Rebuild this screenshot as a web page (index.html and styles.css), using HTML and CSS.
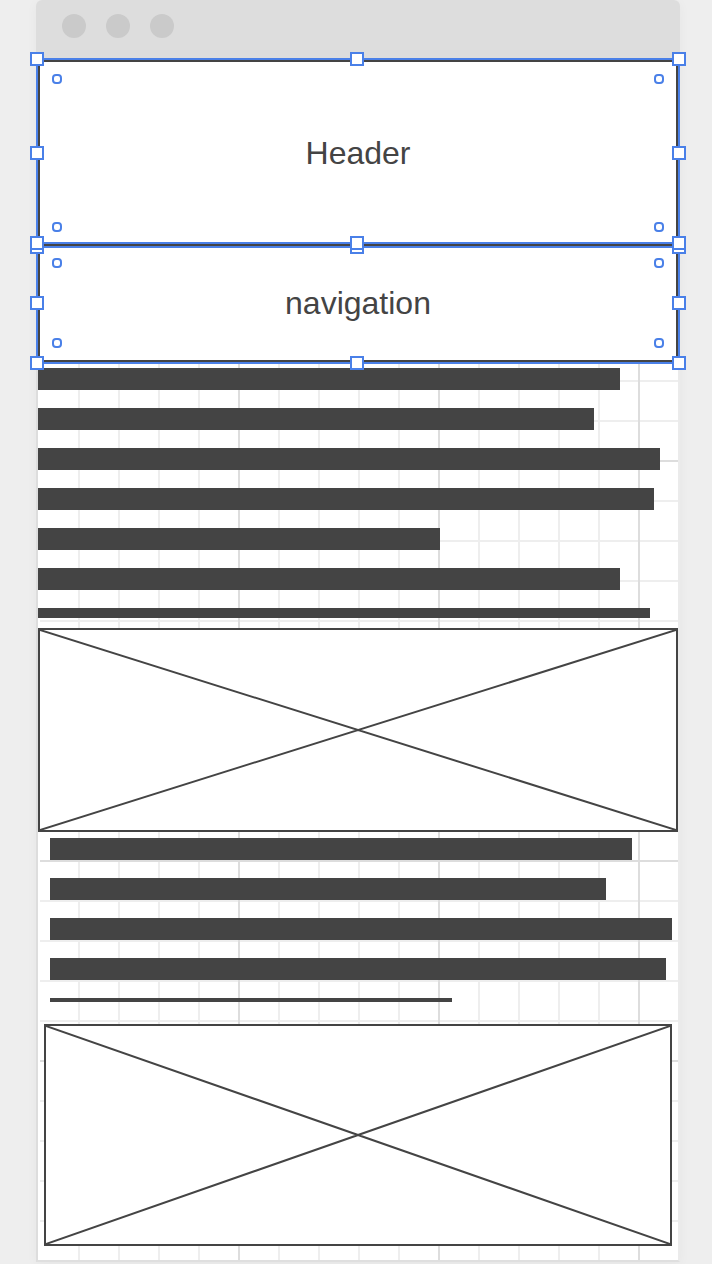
FILE: index.html
```html
<!DOCTYPE html>
<html lang="en">
<head>
<meta charset="utf-8">
<meta name="viewport" content="width=device-width, initial-scale=1">
<title>Wireframe</title>
<link rel="stylesheet" href="styles.css">
</head>
<body>
<div class="window">
  <div class="titlebar"><span class="dot"></span><span class="dot"></span><span class="dot"></span></div>
  <main class="canvas">
    <header class="box box-header">
      Header
      <i class="handle top left"></i><i class="handle top center"></i><i class="handle top right"></i>
      <i class="handle middle left"></i><i class="handle middle right"></i>
      <i class="handle bottom left"></i><i class="handle bottom center"></i><i class="handle bottom right"></i>
      <i class="corner c-top c-left"></i><i class="corner c-top c-right"></i>
      <i class="corner c-bottom c-left"></i><i class="corner c-bottom c-right"></i>
    </header>
    <nav class="box box-nav">
      navigation
      <i class="handle top left"></i><i class="handle top center"></i><i class="handle top right"></i>
      <i class="handle middle left"></i><i class="handle middle right"></i>
      <i class="handle bottom left"></i><i class="handle bottom center"></i><i class="handle bottom right"></i>
      <i class="corner c-top c-left"></i><i class="corner c-top c-right"></i>
      <i class="corner c-bottom c-left"></i><i class="corner c-bottom c-right"></i>
    </nav>
    <div class="text text-intro">
      <span class="bar" style="width:582px"></span>
      <span class="bar" style="width:556px"></span>
      <span class="bar" style="width:622px"></span>
      <span class="bar" style="width:616px"></span>
      <span class="bar" style="width:402px"></span>
      <span class="bar" style="width:582px"></span>
      <span class="bar" style="width:612px"></span>
    </div>
    <div class="image image-wide">
      <svg viewBox="0 0 100 100" preserveAspectRatio="none" aria-hidden="true"><path d="M0 0L100 100M100 0L0 100"/></svg>
    </div>
    <div class="text text-body">
      <span class="bar" style="width:582px"></span>
      <span class="bar" style="width:556px"></span>
      <span class="bar" style="width:622px"></span>
      <span class="bar" style="width:616px"></span>
      <span class="bar" style="width:402px"></span>
    </div>
    <div class="image image-inset">
      <svg viewBox="0 0 100 100" preserveAspectRatio="none" aria-hidden="true"><path d="M0 0L100 100M100 0L0 100"/></svg>
    </div>
  </main>
</div>
</body>
</html>
```

FILE: styles.css
```css
* { box-sizing: border-box; }

:root {
  --ink: #444;
  --select: #4a80e8;
  --minor: #eee;
  --major: #ddd;
}

body {
  margin: 0;
  padding: 0 32px 2px 36px;
  background: #eee;
  color: var(--ink);
  font: 32px/36px "Liberation Sans", Arial, sans-serif;
}

.window {
  border-radius: 6px 6px 0 0;
  box-shadow: 0 2px 12px rgba(0, 0, 0, 0.04);
}

.titlebar {
  display: flex;
  gap: 20px;
  padding: 14px 26px 20px;
  background: #ddd;
  border-radius: 6px 6px 0 0;
}

.dot {
  width: 24px;
  height: 24px;
  border-radius: 50%;
  background: #cacaca;
}

.canvas {
  display: flex;
  flex-direction: column;
  padding: 2px 0 14px;
  border: solid;
  border-width: 0 2px 2px;
  border-color: #ddd #ebebeb #dfdfdf #ddd;
  background:
    linear-gradient(#fff, #fff) 0 0 / 2px 100% no-repeat,
    linear-gradient(var(--major) 2px, transparent 2px) 0 2px / 100% 200px,
    linear-gradient(90deg, var(--major) 2px, transparent 2px) 0 0 / 200px 100%,
    linear-gradient(var(--minor) 2px, transparent 2px) 0 2px / 100% 40px,
    linear-gradient(90deg, var(--minor) 2px, transparent 2px) 0 0 / 40px 100%,
    #fff;
  background-origin: padding-box;
  background-clip: padding-box;
}

/* Selected boxes with resize handles */
.box {
  position: relative;
  display: flex;
  align-items: center;
  justify-content: center;
  border: 2px solid var(--ink);
  background: #fff;
}

.box::after {
  content: "";
  position: absolute;
  z-index: 1;
  inset: -4px;
  border: 2px solid var(--select);
}

.box-header { min-height: 186px; }
.box-nav { min-height: 118px; margin-top: -2px; }

.handle {
  position: absolute;
  z-index: 2;
  width: 14px;
  height: 14px;
  border: 2px solid var(--select);
  background: #fff;
}

.top { top: -10px; }
.middle { top: calc(50% - 7px); }
.bottom { bottom: -10px; }
.left { left: -10px; }
.center { left: calc(50% - 8px); }
.right { right: -10px; }

.corner {
  position: absolute;
  width: 10px;
  height: 10px;
  border: 2px solid var(--select);
  border-radius: 4px;
}

.c-top { top: 12px; }
.c-bottom { bottom: 12px; }
.c-left { left: 12px; }
.c-right { right: 12px; }

/* Placeholder text */
.text {
  display: flex;
  flex-direction: column;
  gap: 18px;
  overflow: hidden;
}

.text-intro { height: 250px; margin: 6px 0 10px; }
.text-body { height: 164px; margin: 6px 0 22px 12px; }

.bar {
  flex: none;
  max-width: 100%;
  height: 22px;
  background: var(--ink);
}

/* Placeholder images */
.image {
  border: 2px solid var(--ink);
  background: #fff;
}

.image svg {
  display: block;
  width: 100%;
  height: 100%;
}

.image path {
  fill: none;
  stroke: var(--ink);
  stroke-width: 2px;
  vector-effect: non-scaling-stroke;
}

.image-wide { height: 204px; }
.image-inset { height: 222px; margin: 0 6px; }
```
